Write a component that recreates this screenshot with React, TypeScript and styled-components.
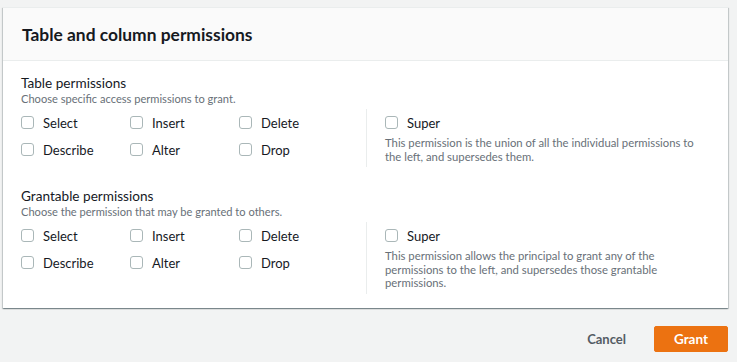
import React from 'react';
import styled, { createGlobalStyle } from 'styled-components';

const GlobalStyle = createGlobalStyle`
  html, body {
    margin: 0;
    padding: 0;
    background: #f2f3f3;
    font-family: Lato, "Open Sans", sans-serif;
    color: #16191f;
  }
`;

const Page = styled.div`
  width: 737px;
  height: 362px;
  box-sizing: border-box;
  padding: 7px 9px 0 3px;
  display: flex;
  flex-direction: column;
`;

const Card = styled.div`
  background: #fff;
  border-top: 1px solid #eaeded;
  box-shadow: 0 1px 1px 0 rgba(0, 28, 36, 0.3), 1px 1px 1px 0 rgba(0, 28, 36, 0.15),
    -1px 1px 1px 0 rgba(0, 28, 36, 0.15);
`;

const Header = styled.div`
  height: 53px;
  box-sizing: border-box;
  background: #fafafa;
  border-bottom: 1px solid #eaeded;
  padding: 0 19px;
  display: flex;
  align-items: center;
`;

const Title = styled.h2`
  margin: 0;
  font-size: 17.4px;
  font-weight: 700;
  color: #16191f;
`;

const Body = styled.div`
  padding: 13px 18px 14px 18px;
  display: flex;
  flex-direction: column;
  gap: 20px;
`;

const Section = styled.div`
  display: flex;
  flex-direction: column;
`;

const SectionTitle = styled.div`
  font-size: 13.6px;
  line-height: 18px;
`;

const SectionDesc = styled.div`
  font-size: 11.1px;
  line-height: 14px;
  color: #687078;
`;

const Options = styled.div`
  margin-top: 3px;
  display: grid;
  grid-template-columns: 345px 1fr;
`;

const OptionGrid = styled.div`
  display: grid;
  grid-template-columns: repeat(3, 109px);
  grid-auto-rows: 27px;
  align-content: start;
`;

const SuperColumn = styled.div`
  border-left: 1px solid #eaeded;
  padding: 0 0 4px 18px;
`;

const Option = styled.label`
  display: flex;
  align-items: center;
  gap: 9px;
  height: 27px;
  font-size: 13px;
  color: #16191f;
`;

const Box = styled.span`
  width: 13px;
  height: 13px;
  box-sizing: border-box;
  border: 1px solid #aab7b8;
  border-radius: 3px;
  background: #fff;
  flex-shrink: 0;
`;

const SuperDesc = styled.div`
  font-size: 11.3px;
  line-height: 13.5px;
  color: #687078;
  max-width: 315px;
`;

const Footer = styled.div`
  display: flex;
  justify-content: flex-end;
  align-items: center;
  gap: 14px;
  padding-top: 18px;
`;

const LinkButton = styled.button`
  background: none;
  border: none;
  padding: 0 14px;
  height: 26px;
  font-family: inherit;
  font-size: 13px;
  font-weight: 700;
  color: #545b64;
`;

const PrimaryButton = styled.button`
  width: 74px;
  height: 26px;
  background: #ec7211;
  border: 1px solid #ec7211;
  border-radius: 2px;
  color: #fff;
  font-family: inherit;
  font-size: 13.5px;
  font-weight: 700;
`;

const names = ['Select', 'Insert', 'Delete', 'Describe', 'Alter', 'Drop'];

interface BlockProps {
  title: string;
  desc: string;
  superDesc: string;
}

const PermissionBlock: React.FC<BlockProps> = ({ title, desc, superDesc }) => (
  <Section>
    <SectionTitle>{title}</SectionTitle>
    <SectionDesc>{desc}</SectionDesc>
    <Options>
      <OptionGrid>
        {names.map((n) => (
          <Option key={n}>
            <Box />
            {n}
          </Option>
        ))}
      </OptionGrid>
      <SuperColumn>
        <Option>
          <Box />
          Super
        </Option>
        <SuperDesc>{superDesc}</SuperDesc>
      </SuperColumn>
    </Options>
  </Section>
);

const App: React.FC = () => (
  <Page>
    <GlobalStyle />
    <Card>
      <Header>
        <Title>Table and column permissions</Title>
      </Header>
      <Body>
        <PermissionBlock
          title="Table permissions"
          desc="Choose specific access permissions to grant."
          superDesc="This permission is the union of all the individual permissions to the left, and supersedes them."
        />
        <PermissionBlock
          title="Grantable permissions"
          desc="Choose the permission that may be granted to others."
          superDesc="This permission allows the principal to grant any of the permissions to the left, and supersedes those grantable permissions."
        />
      </Body>
    </Card>
    <Footer>
      <LinkButton>Cancel</LinkButton>
      <PrimaryButton>Grant</PrimaryButton>
    </Footer>
  </Page>
);

export default App;
